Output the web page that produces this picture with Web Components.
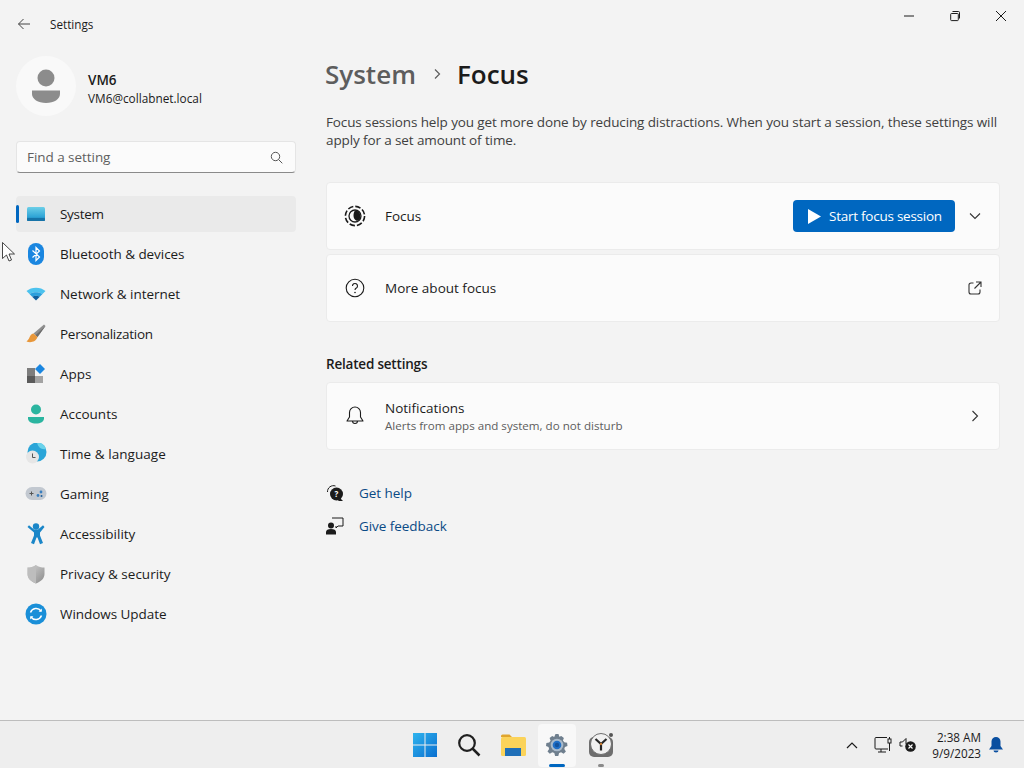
<!DOCTYPE html>
<html>
<head>
<meta charset="utf-8">
<title>Settings</title>
<style>
    html, body { margin: 0; height: 100%; }
    body {
        width: 1024px;
        height: 768px;
        overflow: hidden;
        background: #f3f3f3;
        color: #1b1b1b;
        font-family: "Open Sans", "Noto Sans", "Liberation Sans", sans-serif;
        font-size: 13.5px;
        display: flex;
        flex-direction: column;
        position: relative;
    }
</style>
</head>
<body>
<title-bar></title-bar>
<div style="display:flex;flex:1;min-height:0">
    <side-bar></side-bar>
    <main-pane></main-pane>
</div>
<task-bar></task-bar>
<mouse-cursor></mouse-cursor>

<script>
const ICONS = {
    system: `<svg viewBox="0 0 20 20" width="20" height="20"><defs><linearGradient id="s" x1="0" y1="0" x2="0" y2="1"><stop offset="0" stop-color="#6ccfe8"/><stop offset=".7" stop-color="#2fa4d6"/><stop offset="1" stop-color="#0f6fa8"/></linearGradient></defs><rect x="1" y="3" width="18" height="14" rx="1.5" fill="url(#s)"/><rect x="1" y="14" width="18" height="3" rx="1" fill="#1673a8"/></svg>`,
    bluetooth: `<svg viewBox="0 0 20 24" width="20" height="24"><rect x="2" y="1" width="16" height="22" rx="8" fill="#1a86e0"/><path d="M6.5 8.5l7 6.5-3.5 3.5V5.5l3.5 3.5-7 6.5" fill="none" stroke="#fff" stroke-width="1.2"/></svg>`,
    network: `<svg viewBox="0 0 20 20" width="20" height="20"><path d="M0.5 7C5.5 2.5 14.5 2.5 19.5 7L16.5 10C12.5 7.5 7.5 7.5 3.5 10Z" fill="#4cc2ee"/><path d="M3.5 10C7.5 7.5 12.5 7.5 16.5 10L13.8 12.7C11.5 11.5 8.5 11.5 6.2 12.7Z" fill="#2a9fdc"/><path d="M6.2 12.7C8.5 11.5 11.5 11.5 13.8 12.7L10 16.5Z" fill="#0f5f9e"/></svg>`,
    brush: `<svg viewBox="0 0 20 20" width="20" height="20"><path d="M18 0.5L19.5 2 11.5 13 7.5 9.5z" fill="#8f8f8f"/><path d="M19.5 2L11.5 13 9.5 11.2z" fill="#6c6c6c"/><path d="M7.5 9.5c-3 .5-3.5 3-4.5 5-.5 1-1.5 2-2.5 3 4 1.5 9.5.5 11-4.5z" fill="#e8973a"/></svg>`,
    apps: `<svg viewBox="0 0 20 20" width="20" height="20"><rect x="1" y="4" width="8" height="8" fill="#7d7d7d"/><rect x="1" y="12" width="8" height="7" fill="#5a5a5a"/><rect x="9" y="12" width="8" height="7" fill="#a3a3a3"/><path d="M14 0l5 5-5 5-5-5z" fill="#1a86e0"/></svg>`,
    accounts: `<svg viewBox="0 0 20 20" width="20" height="20"><circle cx="10" cy="5.5" r="5" fill="#2bb5a0"/><path d="M2 13h16v1.5c0 3-3.5 5-8 5s-8-2-8-5z" fill="#2bb5a0"/></svg>`,
    time: `<svg viewBox="0 0 22 22" width="22" height="22"><circle cx="12" cy="9" r="9.5" fill="#2aa5d8"/><path d="M12 -.5a9.5 9.5 0 0 1 9 6.5c-5 1-8-2-9-6.5z" fill="#6ad2ea"/><circle cx="7.5" cy="14" r="6.5" fill="#e6e6e6"/><path d="M7.5 10.5V14.5H10.5" fill="none" stroke="#555" stroke-width="1"/></svg>`,
    gaming: `<svg viewBox="0 0 22 20" width="22" height="20"><rect x="0.5" y="3" width="21" height="13" rx="6.5" fill="#c2c8d0"/><path d="M4.5 9.5h4M6.5 7.5v4" stroke="#555" stroke-width="1"/><circle cx="13" cy="11.5" r="1.4" fill="#3a7fc0"/><circle cx="16" cy="8" r="1.4" fill="#3a7fc0"/><circle cx="16.5" cy="12" r="1" fill="#1f5f9a"/></svg>`,
    access: `<svg viewBox="0 0 20 22" width="20" height="22"><circle cx="10" cy="3.5" r="3.2" fill="#1a86c8"/><path d="M1.5 4l1.5-1.7 5 4.2h4l5-4.2 1.5 1.7-4.5 5.500v3l3 7.500-3 1.200-2.500-6.700h-1l-2.500 6.700-3-1.200 3-7.500v-3z" fill="#1a86c8"/></svg>`,
    privacy: `<svg viewBox="0 0 20 20" width="20" height="20"><defs><linearGradient id="p" x1="0" y1="0" x2="1" y2="1"><stop offset="0" stop-color="#d4d4d4"/><stop offset="1" stop-color="#8a8a8a"/></linearGradient></defs><path d="M10 1c2.5 2 5.5 2.5 8.5 2.5V10c0 4.5-3.5 7.5-8.5 9.5C5 17.5 1.5 14.5 1.5 10V3.5C4.5 3.5 7.5 3 10 1z" fill="url(#p)"/><path d="M10 1v18.5C5 17.5 1.5 14.5 1.5 10V3.5C4.5 3.5 7.5 3 10 1z" fill="#bdbdbd"/></svg>`,
    update: `<svg viewBox="0 0 22 22" width="22" height="22"><circle cx="11" cy="11" r="10.5" fill="#1a8fd8"/><path d="M5.5 9.5a6 6 0 0 1 10.5-1.5M16.5 12.5a6 6 0 0 1-10.500 1.500" fill="none" stroke="#fff" stroke-width="1.5"/><path d="M16.8 5.5v3.2h-3.2zM5.2 16.5v-3.2h3.2z" fill="#fff"/></svg>`,
};

class TitleBar extends HTMLElement {
    constructor() {
        super();
        this.attachShadow({ mode: 'open' });
    }

    connectedCallback() {
        this.shadowRoot.innerHTML = `
            <style>
                :host { display: flex; height: 48px; flex: none; align-items: center; justify-content: space-between; }
                .left { display: flex; align-items: center; padding-left: 16px; font-size: 11.7px; }
                .left svg { margin-right: 18px; }
                .right { display: flex; align-self: flex-start; }
                .btn { width: 46px; height: 32px; display: flex; align-items: center; justify-content: center; }
            </style>
            <div class="left">
                <svg width="16" height="16" viewBox="0 0 16 16"><path d="M14 8H2.5M7.5 3l-5 5 5 5" fill="none" stroke="#444" stroke-width="1"/></svg>
                <span>Settings</span>
            </div>
            <div class="right">
                <div class="btn"><svg width="12" height="12" viewBox="0 0 12 12"><path d="M1 6h10" stroke="#1b1b1b"/></svg></div>
                <div class="btn"><svg width="12" height="12" viewBox="0 0 12 12"><path d="M3.5 1.5h6a1 1 0 0 1 1 1v6M2.5 3.5h6a.8.8 0 0 1 .8.8v5.500a.8.8 0 0 1-.8.8h-6a.8.8 0 0 1-.8-.8V4.300a.8.8 0 0 1 .8-.8z" fill="none" stroke="#1b1b1b"/></svg></div>
                <div class="btn"><svg width="12" height="12" viewBox="0 0 12 12"><path d="M1 1l10 10M11 1L1 11" stroke="#1b1b1b"/></svg></div>
            </div>
        `;
    }
}

class UserCard extends HTMLElement {
    constructor() {
        super();
        this.attachShadow({ mode: 'open' });
    }

    connectedCallback() {
        this.shadowRoot.innerHTML = `
            <style>
                :host { display: flex; align-items: center; gap: 12px; height: 60px; margin-top: 8px; }
                .avatar { width: 60px; height: 60px; border-radius: 50%; background: #f9f9f9; display: flex; align-items: center; justify-content: center; }
                .name { font-weight: 600; font-size: 13.5px; line-height: 18px; }
                .mail { font-size: 11.8px; line-height: 18px; }
                .text { margin-top: 6px; }
            </style>
            <div class="avatar">
                <svg width="30" height="36" viewBox="0 0 30 36"><circle cx="15" cy="10" r="8.5" fill="#8c8c8c"/><path d="M1 22.5h28v3.5c0 5-6 9-14 9S1 31 1 26z" fill="#8c8c8c"/></svg>
            </div>
            <div class="text">
                <div class="name">VM6</div>
                <div class="mail">VM6@collabnet.local</div>
            </div>
        `;
    }
}

class SearchBox extends HTMLElement {
    constructor() {
        super();
        this.attachShadow({ mode: 'open' });
    }

    connectedCallback() {
        this.shadowRoot.innerHTML = `
            <style>
                :host {
                    display: flex; align-items: center; justify-content: space-between;
                    box-sizing: border-box; width: 280px; height: 32px; margin-top: 25px; padding: 0 12px 0 10px;
                    background: #fbfbfb; border: 1px solid #e5e5e5; border-bottom: 1px solid #8a8a8a; border-radius: 4px;
                    font-size: 13.5px; letter-spacing: -.05px; color: #5f5f5f;
                }
            </style>
            <span>Find a setting</span>
            <svg width="13" height="13" viewBox="0 0 13 13"><circle cx="5.5" cy="5.5" r="4.2" fill="none" stroke="#555"/><path d="M8.5 8.5l3.8 3.8" stroke="#555"/></svg>
        `;
    }
}

class NavItem extends HTMLElement {
    constructor() {
        super();
        this.attachShadow({ mode: 'open' });
    }

    connectedCallback() {
        this.shadowRoot.innerHTML = `
            <style>
                :host { display: flex; align-items: center; height: 36px; width: 280px; border-radius: 4px; position: relative; font-size: 13.5px; }
                :host([active]) { background: #eaeaea; }
                :host([active])::before { content: ''; position: absolute; left: 0; top: 9px; width: 3px; height: 18px; border-radius: 2px; background: #0067c0; }
                .icon { width: 24px; height: 24px; margin: 0 8px 0 8px; display: flex; align-items: center; justify-content: center; }
                .label { margin-left: 4px; }
            </style>
            <div class="icon">${ICONS[this.getAttribute('icon')]}</div>
            <span class="label"><slot></slot></span>
        `;
    }
}

class SideBar extends HTMLElement {
    constructor() {
        super();
        this.attachShadow({ mode: 'open' });
    }

    connectedCallback() {
        this.shadowRoot.innerHTML = `
            <style>
                :host { display: flex; flex-direction: column; flex: none; width: 326px; box-sizing: border-box; padding-left: 16px; }
                nav { display: flex; flex-direction: column; gap: 4px; margin-top: 23px; }
            </style>
            <user-card></user-card>
            <search-box></search-box>
            <nav>
                <nav-item icon="system" active style="letter-spacing:-.3px">System</nav-item>
                <nav-item icon="bluetooth" style="letter-spacing:-.05px">Bluetooth &amp; devices</nav-item>
                <nav-item icon="network" style="letter-spacing:-.05px">Network &amp; internet</nav-item>
                <nav-item icon="brush" style="letter-spacing:-.27px">Personalization</nav-item>
                <nav-item icon="apps">Apps</nav-item>
                <nav-item icon="accounts">Accounts</nav-item>
                <nav-item icon="time" style="letter-spacing:.06px">Time &amp; language</nav-item>
                <nav-item icon="gaming">Gaming</nav-item>
                <nav-item icon="access">Accessibility</nav-item>
                <nav-item icon="privacy">Privacy &amp; security</nav-item>
                <nav-item icon="update" style="letter-spacing:-.05px">Windows Update</nav-item>
            </nav>
        `;
    }
}

class SettingCard extends HTMLElement {
    constructor() {
        super();
        this.attachShadow({ mode: 'open' });
    }

    connectedCallback() {
        this.shadowRoot.innerHTML = `
            <style>
                :host {
                    display: flex; align-items: center; box-sizing: border-box; height: 68px; padding: 0 16px;
                    background: #fbfbfb; border: 1px solid #ebebeb; border-radius: 4px;
                }
                .icon { width: 24px; height: 24px; margin-right: 18px; display: flex; align-items: center; justify-content: center; }
                .body { flex: 1; font-size: 13.5px; line-height: 18px; }
                :host([two-line]) .body { padding-top: 2px; }
                .sub { font-size: 11.6px; line-height: 18px; color: #5d5d5d; }
                .end { display: flex; align-items: center; }
            </style>
            <div class="icon"><slot name="icon"></slot></div>
            <div class="body"><slot></slot><div class="sub"><slot name="sub"></slot></div></div>
            <div class="end"><slot name="end"></slot></div>
        `;
    }
}

class MainPane extends HTMLElement {
    constructor() {
        super();
        this.attachShadow({ mode: 'open' });
    }

    connectedCallback() {
        this.shadowRoot.innerHTML = `
            <style>
                :host { display: block; width: 674px; }
                h1 { display: flex; align-items: center; height: 38px; margin: 7px 0 0 -1px; font-size: 26px; font-weight: 600; line-height: 38px; }
                h1 .parent { color: #5d5d5d; }
                h1 svg { margin: 0 15px 0 16px; }
                p { margin: 20px 0 0 0; font-size: 13.5px; letter-spacing: -.115px; line-height: 18px; color: #404040; }
                .cards { display: flex; flex-direction: column; gap: 4px; margin-top: 33px; }
                h2 { margin: 33px 0 9px; font-size: 13.5px; font-weight: 600; letter-spacing: -.2px; line-height: 18px; }
                .start {
                    display: flex; align-items: center; height: 32px; width: 162px; box-sizing: border-box; padding-left: 14px; gap: 8px;
                    background: #0067c0; color: #fff; border-radius: 4px; font-size: 13.5px; letter-spacing: -.25px; margin-right: 14px;
                }
                .links { margin-top: 33px; display: flex; flex-direction: column; gap: 13px; }
                .link { display: flex; align-items: center; height: 20px; color: #0a4a85; font-size: 13.5px; letter-spacing: -.05px; gap: 15px; }
                svg { display: block; }
            </style>
            <h1><span class="parent">System</span>
                <svg width="10" height="12" viewBox="0 0 10 12"><path d="M3 1.5l4.5 4.5L3 10.5" fill="none" stroke="#5d5d5d" stroke-width="1.2"/></svg>
                <span>Focus</span></h1>
            <p>Focus sessions help you get more done by reducing distractions. When you start a session, these settings will apply for a set amount of time.</p>
            <div class="cards">
                <setting-card>
                    <svg slot="icon" width="22" height="22" viewBox="0 0 22 22"><circle cx="11" cy="11" r="9.6" fill="none" stroke="#1b1b1b" stroke-width="1.6" stroke-dasharray="5.5 2.04"/><circle cx="11" cy="11" r="6" fill="none" stroke="#1b1b1b" stroke-width="1.3"/><path d="M11 5.5a5.5 5.5 0 0 1 2 10.6C10.500 15 9.500 13 9.500 10.500c0-2 .5-3.700 1.500-5z" fill="#1b1b1b"/></svg>
                    Focus
                    <div slot="end" style="display:flex;align-items:center;margin-right:2px">
                        <div class="start">
                            <svg width="14" height="15" viewBox="0 0 14 15"><path d="M1 0l13 7.5L1 15z" fill="#fff"/></svg>
                            <span>Start focus session</span>
                        </div>
                        <svg width="12" height="8" viewBox="0 0 12 8"><path d="M1 1.5l5 5 5-5" fill="none" stroke="#333" stroke-width="1.1"/></svg>
                    </div>
                </setting-card>
                <setting-card>
                    <svg slot="icon" width="20" height="20" viewBox="0 0 20 20"><circle cx="10" cy="10" r="8.8" fill="none" stroke="#1b1b1b" stroke-width="1.1"/><path d="M7.5 8a2.5 2.5 0 1 1 3.8 2.1c-.9.5-1.3 1-1.3 2" fill="none" stroke="#1b1b1b" stroke-width="1.1"/><circle cx="10" cy="14.5" r=".8" fill="#1b1b1b"/></svg>
                    More about focus
                    <svg slot="end" width="14" height="14" viewBox="0 0 14 14" style="margin-right:1px"><path d="M5.5 2H3a2 2 0 0 0-2 2v7a2 2 0 0 0 2 2h7a2 2 0 0 0 2-2V8.5M8 1h5v5M13 1L6.5 7.5" fill="none" stroke="#333" stroke-width="1.1"/></svg>
                </setting-card>
            </div>
            <h2>Related settings</h2>
            <setting-card two-line>
                <svg slot="icon" width="18" height="20" viewBox="0 0 18 20"><path d="M9 1a5.5 5.5 0 0 0-5.5 5.5V11L1 15h16l-2.5-4V6.5A5.5 5.5 0 0 0 9 1zM6.5 15a2.5 2.5 0 0 0 5 0" fill="none" stroke="#1b1b1b" stroke-width="1.1" stroke-linejoin="round"/></svg>
                Notifications
                <span slot="sub">Alerts from apps and system, do not disturb</span>
                <svg slot="end" width="8" height="12" viewBox="0 0 8 12" style="margin-right:4px"><path d="M1.5 1l5 5-5 5" fill="none" stroke="#333" stroke-width="1.1"/></svg>
            </setting-card>
            <div class="links">
                <div class="link">
                    <svg width="18" height="18" viewBox="0 0 18 18"><path d="M1.5 8a6 6 0 0 1 8-6" fill="none" stroke="#1b1b1b"/><circle cx="10.5" cy="10" r="6.5" fill="#1b1b1b"/><path d="M14 14l3 3h-5z" fill="#1b1b1b"/><text x="10.5" y="13" font-size="8" font-weight="700" fill="#fff" text-anchor="middle">?</text></svg>
                    <span>Get help</span>
                </div>
                <div class="link">
                    <svg width="18" height="18" viewBox="0 0 18 18"><circle cx="5" cy="8.5" r="3" fill="#1b1b1b"/><path d="M0 17.5V15c0-2 2-3 5-3s5 1 5 3v2.5z" fill="#1b1b1b"/><path d="M6 1h11v8h-5l-2 2V9" fill="none" stroke="#1b1b1b"/></svg>
                    <span>Give feedback</span>
                </div>
            </div>
        `;
    }
}

class TaskBar extends HTMLElement {
    constructor() {
        super();
        this.attachShadow({ mode: 'open' });
    }

    connectedCallback() {
        this.shadowRoot.innerHTML = `
            <style>
                :host {
                    display: grid; grid-template-columns: 1fr auto 1fr; flex: none; height: 48px; box-sizing: border-box;
                    background: #eeeeee; border-top: 1px solid #bdbdbd; font-size: 11.7px;
                }
                .apps { display: flex; padding-left: 2px; }
                .app { width: 44px; height: 47px; display: flex; align-items: center; justify-content: center; position: relative; }
                .app.on::before { content: ''; position: absolute; left: 3px; right: 3px; top: 3px; bottom: 1px; background: #f8f8f8; border-radius: 4px; }
                .app svg { position: relative; }
                .app.on::after { content: ''; position: absolute; left: 14px; width: 16px; height: 3px; bottom: 1px; background: #0067c0; border-radius: 2px; }
                .app.run::after { content: ''; position: absolute; left: 19px; width: 6px; height: 3px; bottom: 1px; background: #8a8a8a; border-radius: 2px; }
                .tray { display: flex; align-items: center; justify-content: flex-end; }
                .clock { text-align: right; line-height: 16px; color: #1b1b1b; }
                .tray svg { display: block; flex: none; }
            </style>
            <div></div>
            <div class="apps">
                <div class="app"><svg width="26" height="26" viewBox="0 0 26 26"><defs><linearGradient id="w" x1="0" y1="0" x2="1" y2="1"><stop offset="0" stop-color="#2fb4ee"/><stop offset="1" stop-color="#0a6fd0"/></linearGradient></defs><path d="M1 1h11.5v11.5H1zM13.5 1H25v11.5H13.5zM1 13.5h11.5V25H1zM13.5 13.5H25V25H13.5z" fill="url(#w)"/></svg></div>
                <div class="app"><svg width="24" height="24" viewBox="0 0 24 24"><circle cx="10" cy="10" r="7.8" fill="none" stroke="#1f1f1f" stroke-width="2.2"/><path d="M15.5 15.5l7 7" stroke="#1f1f1f" stroke-width="2.5"/></svg></div>
                <div class="app"><svg width="26" height="24" viewBox="0 0 26 24"><path d="M1 3a1.5 1.5 0 0 1 1.5-1.5h7L12 4H1z" fill="#e0a52e"/><rect x="1" y="4" width="25" height="19" rx="1.5" fill="#fbd35a"/><rect x="5" y="15" width="16" height="8" fill="#1f6fb8"/></svg></div>
                <div class="app on"><svg width="24" height="24" viewBox="0 0 24 24"><path d="M10.5 1h3l.8 2.8 2-.9 2.6 2-1 2.6 1.400 1.700 2.800.5.400 3.200-2.600 1.200-.6 2 1.600 2.400-2.300 2.300-2.500-1.500-2 .8-.8 2.800h-3.200l-.8-2.800-2-.8-2.500 1.500-2.300-2.300 1.600-2.400-.6-2L1 13.100l.4-3.200 2.800-.5 1.400-1.700-1-2.600 2.600-2 2 .9z" fill="#6f7f8e"/><circle cx="12" cy="12" r="6.3" fill="#a9bacb"/><circle cx="12" cy="12" r="4.3" fill="#1f6fc8"/><circle cx="12" cy="12" r="2.2" fill="#15539c"/></svg></div>
                <div class="app run"><svg width="26" height="26" viewBox="0 0 26 26"><circle cx="23" cy="3" r="2" fill="#555"/><rect x="1" y="5" width="24" height="20" rx="5" fill="#6e6e6e"/><circle cx="13" cy="12" r="10.5" fill="#f1f1f1" stroke="#6e6e6e"/><path d="M13 12L7.5 7M13 12l5.5-5M13 12v6.5" stroke="#262626" stroke-width="2.2"/><circle cx="13" cy="12" r="1.2" fill="#c97a2f"/></svg></div>
            </div>
            <div class="tray">
                <svg width="12" height="8" viewBox="0 0 12 8" style="margin-right:16px"><path d="M1 7l5-5 5 5" fill="none" stroke="#1b1b1b" stroke-width="1.2"/></svg>
                <svg width="18" height="17" viewBox="0 0 18 17" style="margin-right:7px"><path d="M13 1.5H2a1 1 0 0 0-1 1V12a1 1 0 0 0 1 1h12M7 13v3M4 16h8" fill="none" stroke="#1b1b1b"/><path d="M15.5 1v14" stroke="#1b1b1b"/><rect x="14" y="3" width="3" height="4" fill="#f0f0f0" stroke="#1b1b1b"/></svg>
                <svg width="17" height="15" viewBox="0 0 17 15" style="margin-right:16px"><path d="M1 5h2.5L7 1.5V7M1 5v4h2.5" fill="none" stroke="#1b1b1b"/><circle cx="11.5" cy="9.5" r="5.3" fill="#1b1b1b"/><path d="M9.5 7.5l4 4M13.5 7.5l-4 4" stroke="#fff" stroke-width="1.1"/></svg>
                <div class="clock"><div>2:38 AM</div><div>9/9/2023</div></div>
                <svg width="16" height="17" viewBox="0 0 16 17" style="margin:0 20px 0 7px"><path d="M8 1a4.5 4.5 0 0 0-4.5 4.5V10L1 13.5h14L12.5 10V5.5A4.5 4.5 0 0 0 8 1z" fill="#0a4fa0"/><path d="M5.5 14.5a2.5 2 0 0 0 5 0z" fill="#0a4fa0"/></svg>
            </div>
        `;
    }
}

class MouseCursor extends HTMLElement {
    constructor() {
        super();
        this.attachShadow({ mode: 'open' });
    }

    connectedCallback() {
        this.shadowRoot.innerHTML = `
            <style>:host { position: absolute; left: 2px; top: 242px; display: block; }</style>
            <svg width="14" height="20" viewBox="0 0 14 20"><path d="M.5.5v16l4-3.5 2.5 6 2.5-1-2.5-6h5.5z" fill="#fff" stroke="#1b1b1b" stroke-width=".8"/></svg>
        `;
    }
}

customElements.define('title-bar', TitleBar);
customElements.define('user-card', UserCard);
customElements.define('search-box', SearchBox);
customElements.define('nav-item', NavItem);
customElements.define('side-bar', SideBar);
customElements.define('setting-card', SettingCard);
customElements.define('main-pane', MainPane);
customElements.define('task-bar', TaskBar);
customElements.define('mouse-cursor', MouseCursor);
</script>
</body>
</html>
